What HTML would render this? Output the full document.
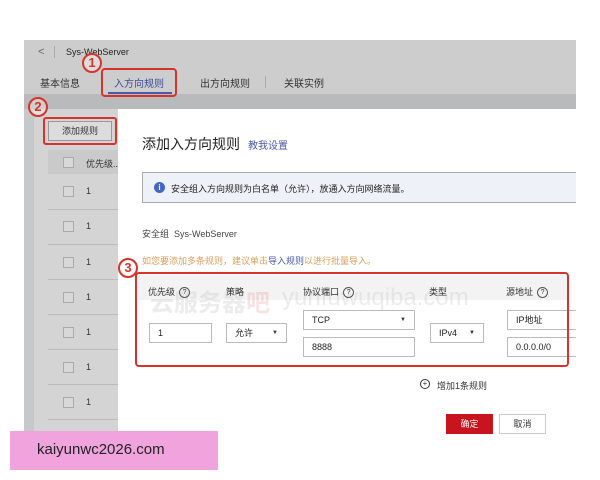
<!DOCTYPE html>
<html><head><meta charset="utf-8"><style>
body{margin:0;width:600px;height:480px;background:#fff;position:relative;overflow:hidden;font-family:"Liberation Sans","Noto Sans CJK SC",sans-serif;color:#333}
.a{position:absolute}
.t{position:absolute;white-space:nowrap;font-size:9px}
.cb{position:absolute;width:9px;height:9px;border:1px solid #aaa;background:#d8d8d8}
.inp{position:absolute;border:1px solid #bbb;background:#fff;font-size:9px;box-sizing:border-box;padding-left:8px;line-height:18px;color:#222}
.dd:after{content:"▼";position:absolute;right:8px;font-size:6px;color:#333}
.circ{position:absolute;width:16px;height:16px;border:2px solid #d7332b;border-radius:50%;color:#d7332b;font-weight:bold;font-size:13px;line-height:16px;text-align:center;background:rgba(255,255,255,0.3)}
.q{display:inline-block;width:9px;height:9px;border:1px solid #555;border-radius:50%;font-size:7px;line-height:9px;text-align:center;margin-left:4px;vertical-align:1px}
</style></head><body>
<div class="a" style="left:24px;top:40px;width:552px;height:54px;background:#cccdcc"></div>
<div class="a" style="left:24px;top:94px;width:552px;height:15px;background:#b9babb"></div>
<div class="t" style="left:38px;top:46px;font-size:11px;color:#666">&lt;</div>
<div class="a" style="left:54px;top:46px;width:1px;height:12px;background:#aaa"></div>
<div class="t" style="left:66px;top:47px;font-size:9px;color:#222">Sys-WebServer</div>
<div class="t" style="left:40px;top:75px;font-size:10px;color:#333">基本信息</div>
<div class="t" style="left:114px;top:75px;font-size:10px;color:#3d4d9b">入方向规则</div>
<div class="a" style="left:108px;top:92px;width:64px;height:2px;background:#4a5aa8"></div>
<div class="a" style="left:101px;top:68px;width:76px;height:29px;border:2px solid #d7332b;border-radius:4px;box-sizing:border-box"></div>
<div class="t" style="left:200px;top:75px;font-size:10px;color:#333">出方向规则</div>
<div class="a" style="left:265px;top:76px;width:1px;height:12px;background:#aaa"></div>
<div class="t" style="left:284px;top:75px;font-size:10px;color:#333">关联实例</div>
<div class="circ" style="left:82px;top:53px">1</div>
<div class="a" style="left:24px;top:109px;width:94px;height:331px;background:#d3d4d3"></div>
<div class="a" style="left:24px;top:109px;width:10px;height:331px;background:#c6c9c9"></div>
<div class="a" style="left:48px;top:121px;width:64px;height:20px;border:1px solid #999;background:#dcdcdc;box-sizing:border-box;font-size:9px;text-align:center;line-height:18px">添加规则</div>
<div class="a" style="left:43px;top:117px;width:74px;height:28px;border:2px solid #d7332b;border-radius:3px;box-sizing:border-box"></div>
<div class="circ" style="left:28px;top:97px">2</div>
<div class="a" style="left:48px;top:150px;width:70px;height:24px;background:#c9cac9"></div>
<div class="cb" style="left:63px;top:157px"></div><div class="t" style="left:86px;top:157px">优先级...</div>
<div class="cb" style="left:63px;top:186px"></div><div class="t" style="left:86px;top:186px">1</div>
<div class="a" style="left:48px;top:209px;width:70px;height:1px;background:#bbb"></div>
<div class="cb" style="left:63px;top:221px"></div><div class="t" style="left:86px;top:221px">1</div>
<div class="a" style="left:48px;top:244px;width:70px;height:1px;background:#bbb"></div>
<div class="cb" style="left:63px;top:257px"></div><div class="t" style="left:86px;top:257px">1</div>
<div class="a" style="left:48px;top:279px;width:70px;height:1px;background:#bbb"></div>
<div class="cb" style="left:63px;top:292px"></div><div class="t" style="left:86px;top:292px">1</div>
<div class="a" style="left:48px;top:314px;width:70px;height:1px;background:#bbb"></div>
<div class="cb" style="left:63px;top:327px"></div><div class="t" style="left:86px;top:327px">1</div>
<div class="a" style="left:48px;top:349px;width:70px;height:1px;background:#bbb"></div>
<div class="cb" style="left:63px;top:362px"></div><div class="t" style="left:86px;top:362px">1</div>
<div class="a" style="left:48px;top:384px;width:70px;height:1px;background:#bbb"></div>
<div class="cb" style="left:63px;top:397px"></div><div class="t" style="left:86px;top:397px">1</div>
<div class="a" style="left:48px;top:419px;width:70px;height:1px;background:#bbb"></div>
<div class="a" style="left:118px;top:109px;width:458px;height:331px;background:#fff"></div>
<div class="t" style="left:142px;top:134px;font-size:14px;color:#222">添加入方向规则</div>
<div class="t" style="left:248px;top:137px;font-size:10px;color:#4a5aa8">教我设置</div>
<div class="a" style="left:142px;top:172px;width:434px;height:31px;background:#eef1f7;border:1px solid #aaa;border-right:none;box-sizing:border-box"></div>
<div class="a" style="left:154px;top:182px;width:11px;height:11px;border-radius:50%;background:#4466c4;color:#fff;font-size:8px;text-align:center;line-height:11px;font-weight:bold">i</div>
<div class="t" style="left:171px;top:182px;color:#222">安全组入方向规则为白名单（允许），放通入方向网络流量。</div>
<div class="t" style="left:142px;top:227px;color:#444">安全组 &nbsp;Sys-WebServer</div>
<div class="t" style="left:142px;top:254px;color:#d9a05e">如您要添加多条规则，建议单击<span style="color:#4a5aa8">导入规则</span>以进行批量导入。</div>
<div class="a" style="left:138px;top:275px;width:430px;height:25px;background:#f3f3f3"></div>
<div class="t" style="left:150px;top:283px;font-size:24px;font-weight:bold;color:rgba(200,200,200,0.35)">云服务器<span style="color:rgba(235,160,160,0.3)">吧</span></div>
<div class="t" style="left:282px;top:284px;font-size:24px;color:rgba(200,200,200,0.35)">yunfuwuqiba.com</div>
<div class="t" style="left:148px;top:285px">优先级<span class="q">?</span></div>
<div class="t" style="left:226px;top:285px">策略</div>
<div class="t" style="left:303px;top:285px">协议端口<span class="q">?</span></div>
<div class="t" style="left:429px;top:285px">类型</div>
<div class="t" style="left:506px;top:285px">源地址<span class="q">?</span></div>
<div class="inp" style="left:149px;top:323px;width:63px;height:20px">1</div>
<div class="inp dd" style="left:226px;top:323px;width:61px;height:20px">允许</div>
<div class="inp dd" style="left:303px;top:310px;width:112px;height:20px">TCP</div>
<div class="inp" style="left:303px;top:337px;width:112px;height:20px">8888</div>
<div class="inp dd" style="left:430px;top:323px;width:54px;height:20px">IPv4</div>
<div class="inp" style="left:507px;top:310px;width:69px;height:20px;border-right:none">IP地址</div>
<div class="inp" style="left:507px;top:337px;width:69px;height:20px;border-right:none">0.0.0.0/0</div>
<div class="a" style="left:135px;top:272px;width:434px;height:95px;border:2px solid #d7332b;border-radius:4px;box-sizing:border-box"></div>
<div class="circ" style="left:118px;top:258px">3</div>
<div class="a" style="left:420px;top:379px;width:8px;height:8px;border:1px solid #333;border-radius:50%;font-size:8px;line-height:8px;text-align:center">+</div>
<div class="t" style="left:437px;top:379px;color:#333">增加1条规则</div>
<div class="a" style="left:446px;top:414px;width:47px;height:20px;background:#c8141c;color:#fff;font-size:9px;text-align:center;line-height:20px">确定</div>
<div class="a" style="left:499px;top:414px;width:47px;height:20px;border:1px solid #ccc;box-sizing:border-box;font-size:9px;text-align:center;line-height:18px">取消</div>
<div class="a" style="left:10px;top:431px;width:208px;height:39px;background:#f0a3dc"></div>
<div class="t" style="left:37px;top:441px;font-size:15px;color:#222">kaiyunwc2026.com</div>
</body></html>
